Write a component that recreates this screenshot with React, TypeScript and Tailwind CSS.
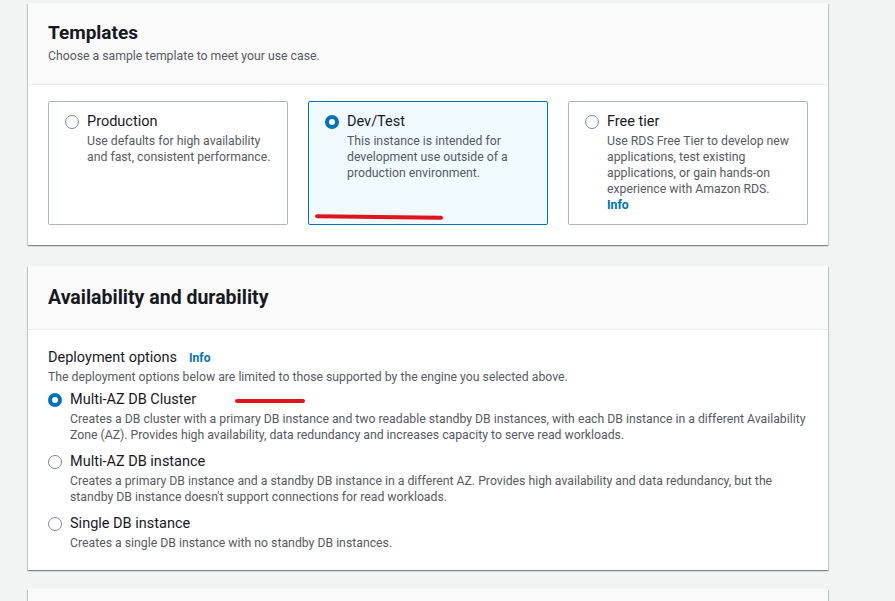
const font = { fontFamily: "Roboto, 'Liberation Sans', sans-serif" };

function Radio({ checked }: { checked?: boolean }) {
  return checked ? (
    <span className="mt-[4px] block w-[14px] h-[14px] shrink-0 rounded-full border-[4px] border-[#0073bb] bg-white" />
  ) : (
    <span className="mt-[4px] block w-[14px] h-[14px] shrink-0 rounded-full border-[1.5px] border-[#7d8998] bg-white" />
  );
}

function Tile({
  title, desc, selected, info, mark,
}: { title: string; desc: string; selected?: boolean; info?: boolean; mark?: boolean }) {
  return (
    <div
      className={
        "relative flex gap-[8px] pl-[16px] pr-[14px] pt-[9px] rounded-[2px] border " +
        (selected ? "bg-[#f1faff] border-[#0073bb]" : "bg-white border-[#aab7b8]")
      }
    >
      <Radio checked={selected} />
      <div className="flex-1">
        <div className="text-[14.5px] leading-[22px] text-[#16191f]">{title}</div>
        <div className="text-[12.25px] leading-[16px] text-[#545b64]">{desc}</div>
        {info && <div className="text-[12.25px] leading-[16px] font-bold text-[#0073bb]">Info</div>}
      </div>
      {mark && (
        <span className="absolute left-[6px] bottom-[5px] w-[128px] h-[4px] rounded-full bg-[#e0141c] rotate-[0.8deg]" />
      )}
    </div>
  );
}

function Option({
  title, desc, selected, mark,
}: { title: string; desc: string[]; selected?: boolean; mark?: boolean }) {
  return (
    <div className="flex gap-[8px]">
      <Radio checked={selected} />
      <div className="flex-1">
        <div className="relative text-[14.5px] leading-[22px] text-[#16191f]">
          {title}
          {mark && (
            <span className="absolute left-[165px] top-[10px] w-[70px] h-[4px] rounded-full bg-[#e0141c]" />
          )}
        </div>
        <div className="text-[12.25px] leading-[16px] text-[#545b64]">
          {desc.map((d, i) => <div key={i}>{d}</div>)}
        </div>
      </div>
    </div>
  );
}

const cardShadow =
  "shadow-[0_1px_1px_0_rgba(0,28,36,0.3),1px_1px_1px_0_rgba(0,28,36,0.15),-1px_1px_1px_0_rgba(0,28,36,0.15)]";

export default function App() {
  return (
    <div className="w-[895px] h-[601px] overflow-hidden bg-[#f2f3f3] pl-[28px] pt-[3px]" style={font}>
      <div className="w-[800px] flex flex-col">
        {/* Templates */}
        <section className={"bg-white " + cardShadow}>
          <div className="bg-[#fafafa] border-b border-[#eaeded] px-[20px] pt-[18px] h-[82px]">
            <h2 className="text-[19px] leading-[24px] font-bold text-[#16191f]">Templates</h2>
            <p className="text-[12.25px] leading-[16px] text-[#545b64] mt-[3px]">Choose a sample template to meet your use case.</p>
          </div>
          <div className="grid grid-cols-3 gap-[20px] px-[20px] pt-[16px] pb-[20px]">
            <div className="h-[124px] grid"><Tile title="Production" desc="Use defaults for high availability and fast, consistent performance." /></div>
            <div className="h-[124px] grid"><Tile title="Dev/Test" desc="This instance is intended for development use outside of a production environment." selected mark /></div>
            <div className="h-[124px] grid"><Tile title="Free tier" desc="Use RDS Free Tier to develop new applications, test existing applications, or gain hands-on experience with Amazon RDS." info /></div>
          </div>
        </section>

        {/* Availability and durability */}
        <section className={"mt-[21px] bg-white " + cardShadow}>
          <div className="bg-[#fafafa] border-b border-[#eaeded] px-[20px] h-[64px] flex items-center">
            <h2 className="text-[19.5px] leading-[24px] font-bold text-[#16191f]">Availability and durability</h2>
          </div>
          <div className="px-[20px] pt-[17px] pb-[19px]">
            <div className="flex items-center gap-[12px]">
              <span className="text-[14.5px] leading-[22px] text-[#16191f]">Deployment options</span>
              <span className="text-[12px] font-bold text-[#0073bb]">Info</span>
            </div>
            <p className="text-[12.25px] leading-[16px] text-[#545b64]">
              The deployment options below are limited to those supported by the engine you selected above.
            </p>
            <div className="mt-[4px] flex flex-col gap-[8px]">
              <Option
                selected
                mark
                title="Multi-AZ DB Cluster"
                desc={[
                  "Creates a DB cluster with a primary DB instance and two readable standby DB instances, with each DB instance in a different Availability",
                  "Zone (AZ). Provides high availability, data redundancy and increases capacity to serve read workloads.",
                ]}
              />
              <Option
                title="Multi-AZ DB instance"
                desc={[
                  "Creates a primary DB instance and a standby DB instance in a different AZ. Provides high availability and data redundancy, but the",
                  "standby DB instance doesn't support connections for read workloads.",
                ]}
              />
              <Option title="Single DB instance" desc={["Creates a single DB instance with no standby DB instances."]} />
            </div>
          </div>
        </section>

        <section className={"mt-[19px] bg-white h-[60px] " + cardShadow}>
          <div className="bg-[#fafafa] h-full" />
        </section>
      </div>
    </div>
  );
}
